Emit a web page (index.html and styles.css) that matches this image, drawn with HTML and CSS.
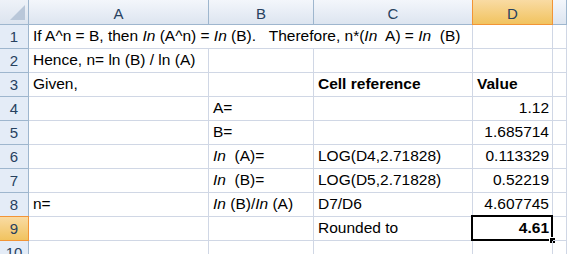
FILE: index.html
```html
<!DOCTYPE html>
<html>
<head>
<meta charset="utf-8">
<link rel="stylesheet" href="styles.css">
</head>
<body>
<div class="sheet">
  <div class="corner"><svg width="28" height="24" viewBox="0 0 28 24"><polygon points="25,5 25,20 10,20" fill="#b9c7d9"/></svg></div>
  <div class="ch">A</div>
  <div class="ch">B</div>
  <div class="ch">C</div>
  <div class="ch sel">D</div>
  <div class="ch"></div>

  <div class="rh">1</div>
  <div class="c span3">If A^n = B, then <i>In</i> (A^n) = <i>In</i> (B).&nbsp;&nbsp; Therefore, n*(<i>In</i>&nbsp; A) = <i>In</i>&nbsp; (B)</div>
  <div class="c"></div><div class="c"></div>

  <div class="rh">2</div>
  <div class="c">Hence, n= ln (B) / ln (A)</div>
  <div class="c"></div><div class="c"></div><div class="c"></div><div class="c"></div>

  <div class="rh">3</div>
  <div class="c">Given,</div>
  <div class="c"></div>
  <div class="c b">Cell reference</div>
  <div class="c b">Value</div>
  <div class="c"></div>

  <div class="rh">4</div>
  <div class="c"></div>
  <div class="c">A=</div>
  <div class="c"></div>
  <div class="c r">1.12</div>
  <div class="c"></div>

  <div class="rh">5</div>
  <div class="c"></div>
  <div class="c">B=</div>
  <div class="c"></div>
  <div class="c r">1.685714</div>
  <div class="c"></div>

  <div class="rh">6</div>
  <div class="c"></div>
  <div class="c"><i>In</i>&nbsp; (A)=</div>
  <div class="c">LOG(D4,2.71828)</div>
  <div class="c r">0.113329</div>
  <div class="c"></div>

  <div class="rh">7</div>
  <div class="c"></div>
  <div class="c"><i>In</i>&nbsp; (B)=</div>
  <div class="c">LOG(D5,2.71828)</div>
  <div class="c r">0.52219</div>
  <div class="c"></div>

  <div class="rh">8</div>
  <div class="c">n=</div>
  <div class="c"><i>In</i> (B)/<i>In</i> (A)</div>
  <div class="c">D7/D6</div>
  <div class="c r">4.607745</div>
  <div class="c"></div>

  <div class="rh sel">9</div>
  <div class="c"></div>
  <div class="c"></div>
  <div class="c">Rounded to</div>
  <div class="c r b active">4.61<span class="handle"></span></div>
  <div class="c"></div>

  <div class="rh">10</div>
  <div class="c"></div><div class="c"></div><div class="c"></div><div class="c"></div><div class="c"></div>
</div>
</body>
</html>
```
FILE: styles.css
```css
html, body {
  margin: 0;
  padding: 0;
  background: #fff;
  overflow: hidden;
}
.sheet {
  display: grid;
  grid-template-columns: 29px 180px 105px 159px 80px 14px;
  grid-template-rows: 25px;
  grid-auto-rows: 24px;
  font-family: "Liberation Sans", Arial, sans-serif;
  font-size: 15.5px;
  color: #000;
  width: 567px;
}
.corner {
  background: linear-gradient(#eef2f8, #dce4ef);
  border-right: 1px solid #9eb6ce;
  border-bottom: 1px solid #9eb6ce;
  box-sizing: border-box;
}
.corner svg { display: block; }
.ch {
  box-sizing: border-box;
  background: linear-gradient(#f3f6fb, #dde5f0);
  border-right: 1px solid #9eb6ce;
  border-bottom: 1px solid #9eb6ce;
  color: #27415f;
  display: flex;
  align-items: center;
  justify-content: center;
  padding-top: 2px;
  font-size: 15px;
}
.ch.sel {
  background: linear-gradient(#f9dba3, #f1c35f);
  border-right-color: #f29436;
  border-bottom-color: #f29436;
  border-left: 1px solid #f29436;
  margin-left: -1px;
}
.rh {
  box-sizing: border-box;
  background: #e4ecf7;
  border-right: 1px solid #9eb6ce;
  border-bottom: 1px solid #9eb6ce;
  color: #27415f;
  display: flex;
  align-items: flex-end;
  justify-content: center;
  padding-bottom: 3px;
  font-size: 15px;
}
.rh.sel {
  background: linear-gradient(#f9dba3, #f1c35f);
  border-right-color: #f29436;
  border-bottom-color: #f29436;
  border-top: 1px solid #f29436;
  margin-top: -1px;
}
.c {
  box-sizing: border-box;
  border-right: 1px solid #d0d7e5;
  border-bottom: 1px solid #d0d7e5;
  padding: 0 3px 3px 4px;
  display: flex;
  align-items: flex-end;
  white-space: pre;
  position: relative;
}
.c i { font-style: italic; }
.span3 { grid-column: span 3; }
.b { font-weight: bold; }
.r { justify-content: flex-end; }
.active::before {
  content: "";
  position: absolute;
  left: -2px;
  top: -2px;
  right: -1px;
  bottom: -1px;
  border: 2px solid #000;
}
.handle {
  position: absolute;
  right: -4px;
  bottom: -4px;
  width: 5px;
  height: 5px;
  background: #000;
  border: 1px solid #fff;
}
```
